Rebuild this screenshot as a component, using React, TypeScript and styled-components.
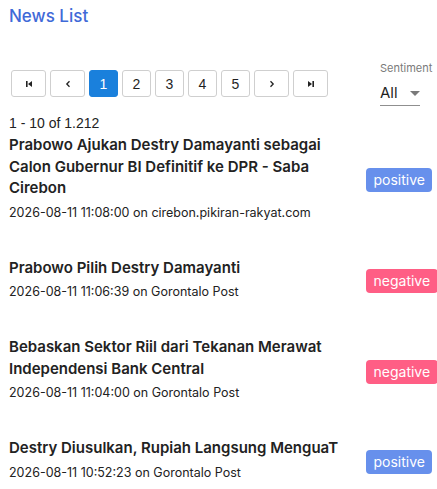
import React, { FC } from 'react';
import styled, { createGlobalStyle } from 'styled-components';

const GlobalStyle = createGlobalStyle`
    body {
        margin: 0;
        background: #fff;
        font-family: Inter, "Open Sans", sans-serif;
        color: #212121;
    }
`;

const Page = styled.div`
    padding: 2px 0 0 9px;
`;

const Heading = styled.h2`
    margin: 0;
    font-family: Inter, sans-serif;
    font-weight: 500;
    font-size: 17px;
    line-height: 28px;
    color: #3f6ad8;
`;

const Toolbar = styled.div`
    display: flex;
    justify-content: space-between;
    align-items: flex-start;
    margin-top: 30px;
    padding-right: 17px;
`;

const Pager = styled.div`
    display: flex;
    gap: 4px;
    margin-top: 10px;
    margin-left: 2px;
`;

const PageButton = styled.button<{ $active?: boolean; $nav?: boolean }>`
    width: ${(p) => (p.$nav ? '35px' : '29px')};
    height: 27px;
    padding: 0;
    display: flex;
    align-items: center;
    justify-content: center;
    border: 1px solid ${(p) => (p.$active ? '#1a80dc' : '#cfcfcf')};
    border-radius: 3px;
    background: ${(p) => (p.$active ? '#1a80dc' : '#fff')};
    color: ${(p) => (p.$active ? '#fff' : '#1f1f1f')};
    font-family: "Liberation Sans", Arial, sans-serif;
    font-size: 14px;
`;

const SelectBox = styled.div`
    display: flex;
    flex-direction: column;
    width: 40px;
`;

const SelectLabel = styled.label`
    font-size: 11px;
    line-height: 14px;
    color: #7a7a7a;
    white-space: nowrap;
    margin-top: 1px;
`;

const SelectValue = styled.div`
    display: flex;
    align-items: center;
    justify-content: space-between;
    margin-top: 8px;
    padding-bottom: 2px;
    border-bottom: 1px solid #8f8f8f;
    font-size: 15px;
    line-height: 20px;
    color: #1f1f1f;
`;

const Range = styled.div`
    margin-top: 9px;
    font-family: "Liberation Sans", Arial, sans-serif;
    font-size: 14px;
    line-height: 16px;
    color: #222;
`;

const List = styled.div`
    display: flex;
    flex-direction: column;
    margin-top: 3px;
`;

const Item = styled.div`
    display: flex;
    align-items: center;
    margin-bottom: 30px;

    &:last-child {
        margin-bottom: 0;
    }
`;

const ItemText = styled.div`
    flex: 1;
    padding-right: 10px;
    padding-bottom: 4px;
`;

const ItemTitle = styled.div`
    font-weight: 600;
    font-size: 15px;
    line-height: 21.5px;
    color: #222;
`;

const ItemMeta = styled.div`
    margin-top: 4px;
    font-size: 12.5px;
    line-height: 20px;
    color: #222;
`;

const BadgeSlot = styled.div`
    width: 71px;
`;

const Badge = styled.span<{ $tone: 'positive' | 'negative' }>`
    display: inline-block;
    padding: 0 7.5px;
    height: 24px;
    line-height: 24px;
    border-radius: 4px;
    background: ${(p) => (p.$tone === 'positive' ? '#6790ec' : '#ff5e85')};
    color: #fff;
    font-size: 14px;
`;

const NavIcon: FC<{ kind: 'first' | 'prev' | 'next' | 'last' }> = ({ kind }) => {
    const flip = kind === 'next' || kind === 'last';
    return (
        <svg width="8" height="8" viewBox="0 0 8 8" style={{ transform: flip ? 'scaleX(-1)' : undefined }}>
            {kind === 'first' || kind === 'last' ? (
                <>
                    <rect x="1" y="1" width="1.6" height="6" fill="#222" />
                    <path d="M7 1 L3 4 L7 7 Z" fill="#222" />
                </>
            ) : (
                <path d="M5.5 1.2 L2.8 4 L5.5 6.8" fill="none" stroke="#222" strokeWidth="1.3" />
            )}
        </svg>
    );
};

const Caret = () => (
    <svg width="10" height="5" viewBox="0 0 10 5">
        <path d="M0 0 L10 0 L5 5 Z" fill="#7a7a7a" />
    </svg>
);

type NewsItem = {
    title: string;
    date: string;
    source: string;
    sentiment: 'positive' | 'negative';
};

const news: NewsItem[] = [
    {
        title: 'Prabowo Ajukan Destry Damayanti sebagai Calon Gubernur BI Definitif ke DPR - Saba Cirebon',
        date: '2026-08-11 11:08:00',
        source: 'cirebon.pikiran-rakyat.com',
        sentiment: 'positive',
    },
    { title: 'Prabowo Pilih Destry Damayanti', date: '2026-08-11 11:06:39', source: 'Gorontalo Post', sentiment: 'negative' },
    {
        title: 'Bebaskan Sektor Riil dari Tekanan Merawat Independensi Bank Central',
        date: '2026-08-11 11:04:00',
        source: 'Gorontalo Post',
        sentiment: 'negative',
    },
    { title: 'Destry Diusulkan, Rupiah Langsung MenguaT', date: '2026-08-11 10:52:23', source: 'Gorontalo Post', sentiment: 'positive' },
];

const App: FC = () => {
    return (
        <Page>
            <GlobalStyle />
            <Heading>News List</Heading>
            <Toolbar>
                <Pager>
                    <PageButton $nav><NavIcon kind="first" /></PageButton>
                    <PageButton $nav><NavIcon kind="prev" /></PageButton>
                    {[1, 2, 3, 4, 5].map((n) => (
                        <PageButton key={n} $active={n === 1}>{n}</PageButton>
                    ))}
                    <PageButton $nav><NavIcon kind="next" /></PageButton>
                    <PageButton $nav><NavIcon kind="last" /></PageButton>
                </Pager>
                <SelectBox>
                    <SelectLabel>Sentiment</SelectLabel>
                    <SelectValue>
                        All <Caret />
                    </SelectValue>
                </SelectBox>
            </Toolbar>
            <Range>1 - 10 of 1.212</Range>
            <List>
                {news.map((item) => (
                    <Item key={item.title}>
                        <ItemText>
                            <ItemTitle>{item.title}</ItemTitle>
                            <ItemMeta>{item.date} on {item.source}</ItemMeta>
                        </ItemText>
                        <BadgeSlot>
                            <Badge $tone={item.sentiment}>{item.sentiment}</Badge>
                        </BadgeSlot>
                    </Item>
                ))}
            </List>
        </Page>
    );
};

export default App;
